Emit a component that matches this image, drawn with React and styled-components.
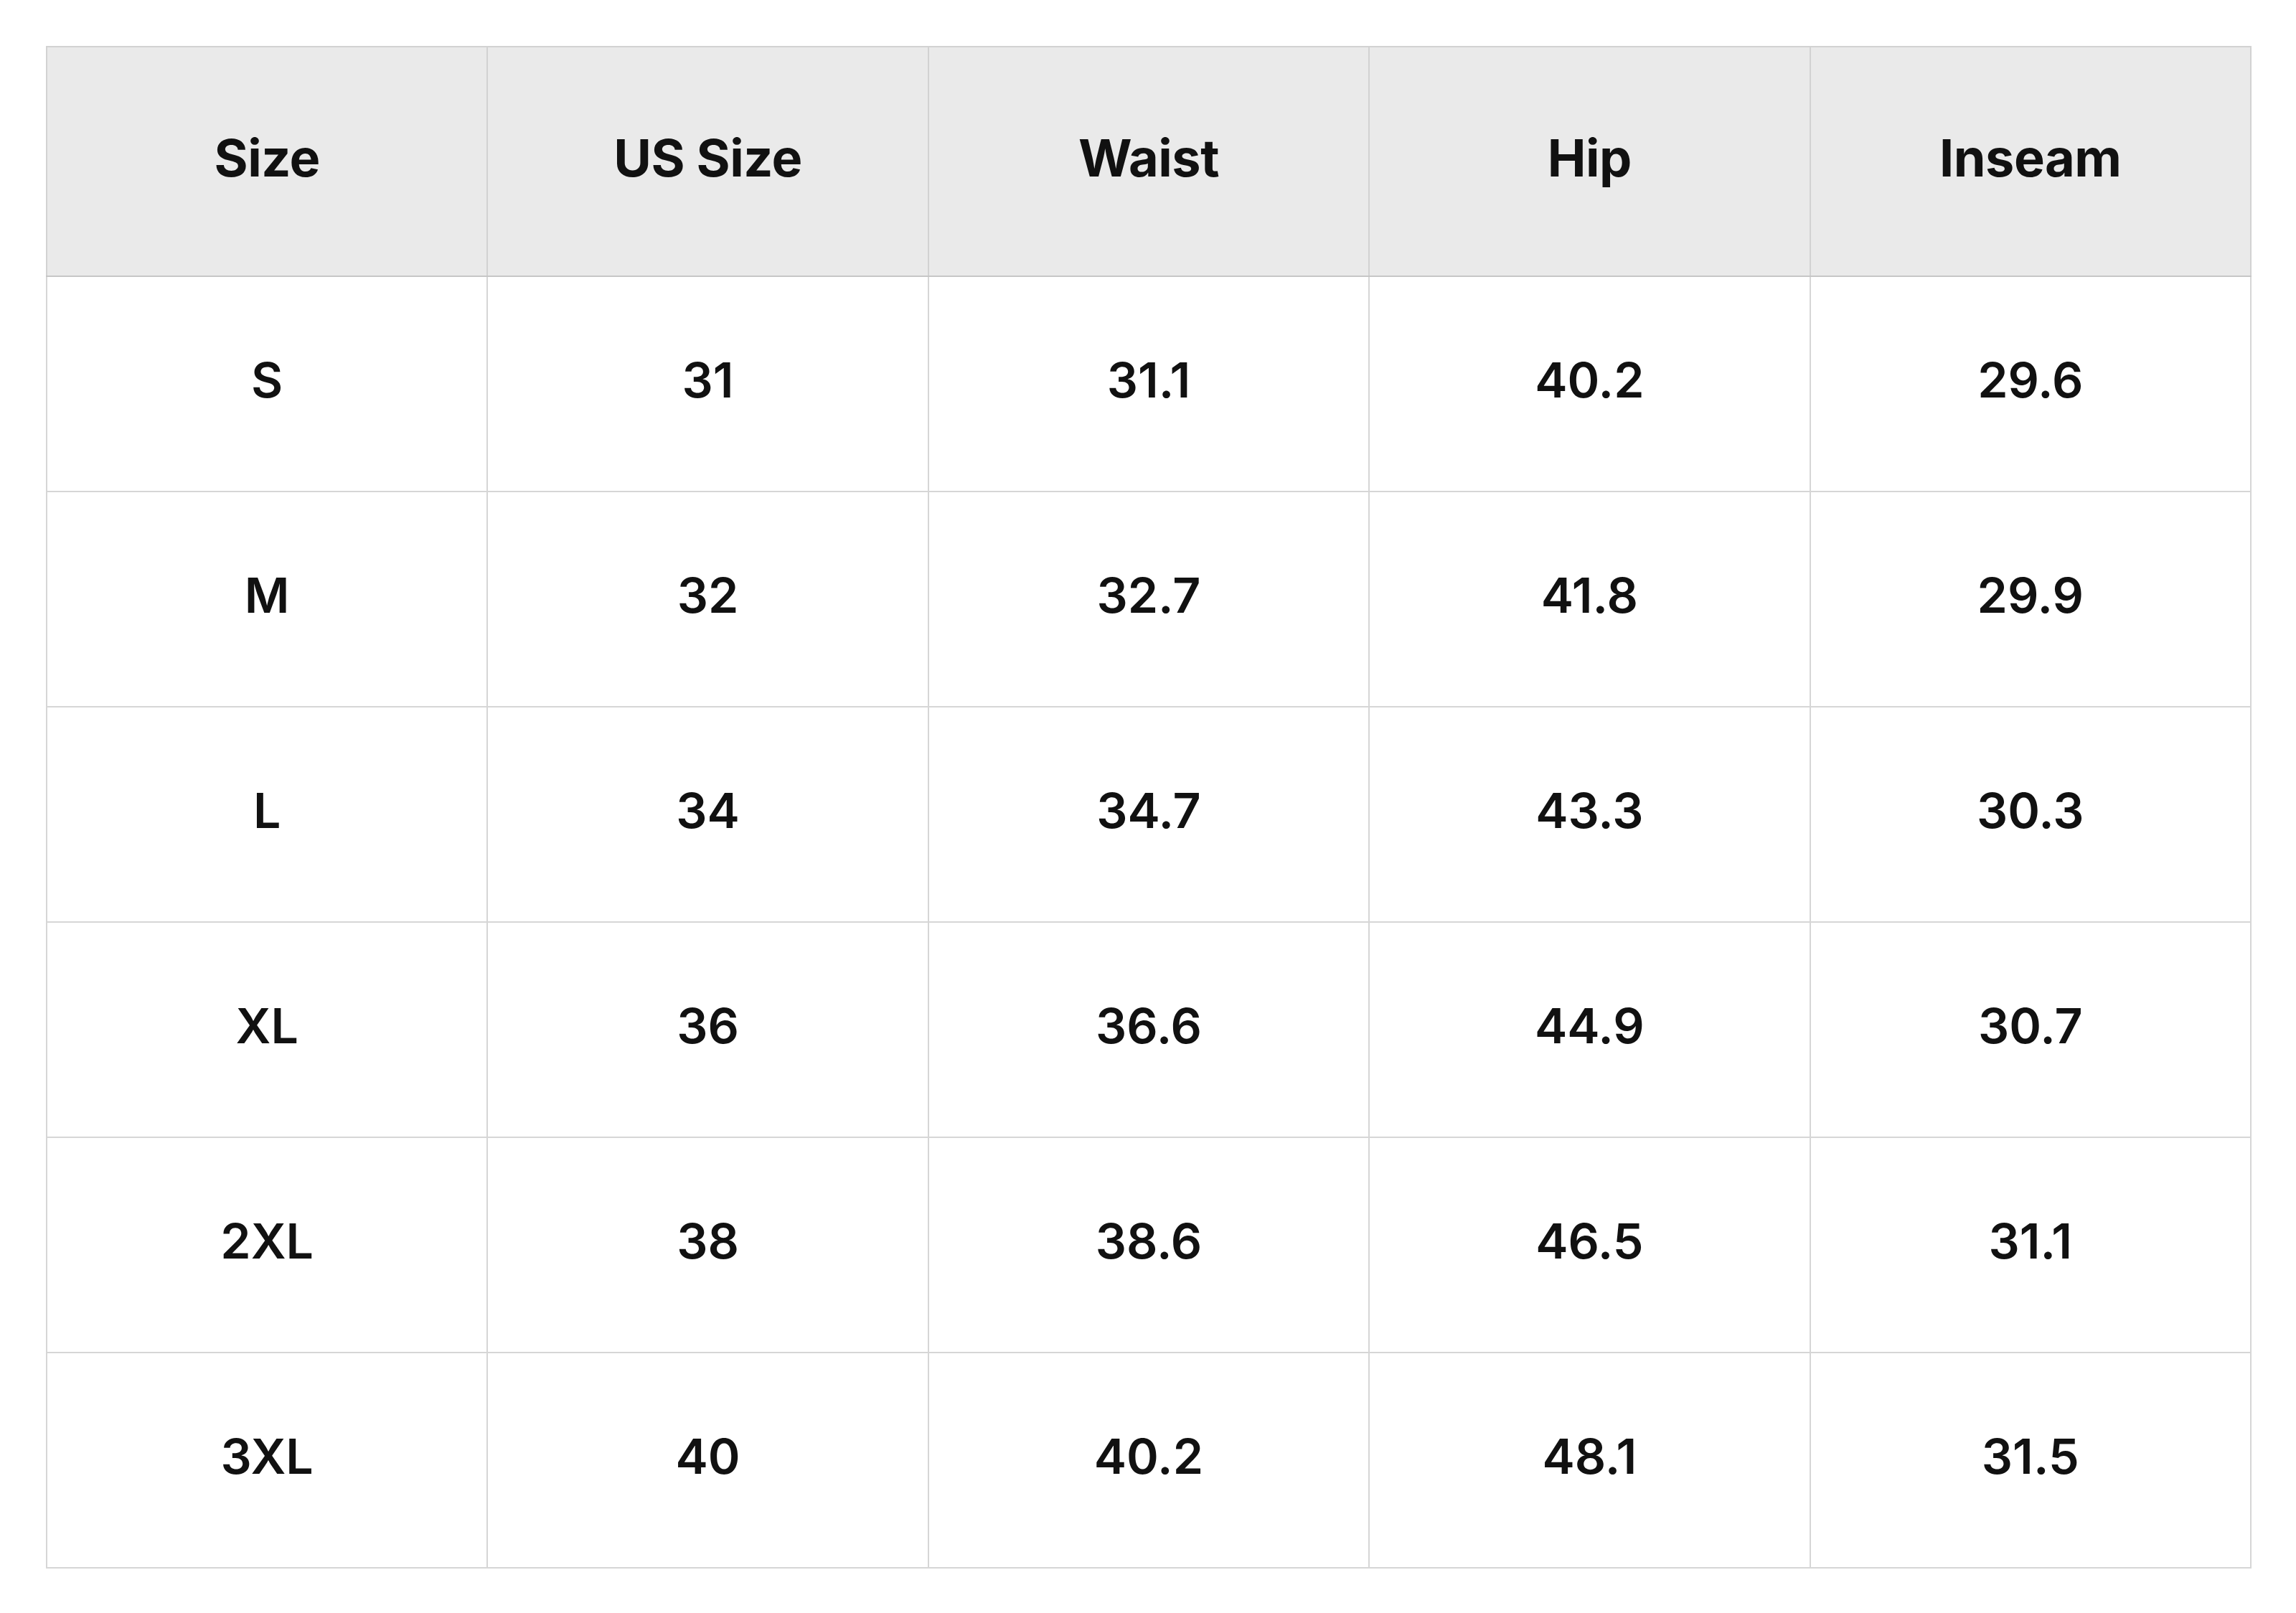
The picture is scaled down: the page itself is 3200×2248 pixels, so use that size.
import styled, { createGlobalStyle } from "styled-components";

const GlobalStyle = createGlobalStyle`
  body {
    margin: 0;
    background: #ffffff;
    font-family: Inter, "Liberation Sans", sans-serif;
    color: #111111;
  }
`;

const Page = styled.div`
  padding: 64px 62px 62px 64px;
`;

const Table = styled.table`
  width: 3074px;
  table-layout: fixed;
  border-collapse: collapse;
  border: 2px solid #c8c8c8;
`;

const HeadCell = styled.th`
  height: 306px;
  padding: 0 0 12px;
  background: #eaeaea;
  border: 2px solid #d2d2d2;
  border-bottom-color: #c6c6c6;
  font-size: 72px;
  font-weight: 700;
  letter-spacing: -0.5px;
  text-align: center;
  vertical-align: middle;
`;

const Cell = styled.td`
  height: 286px;
  padding: 0 0 12px;
  border: 2px solid #d6d6d6;
  font-size: 68px;
  font-weight: 600;
  text-align: center;
  vertical-align: middle;
`;

const columns = ["Size", "US Size", "Waist", "Hip", "Inseam"];

const rows = [
  ["S", "31", "31.1", "40.2", "29.6"],
  ["M", "32", "32.7", "41.8", "29.9"],
  ["L", "34", "34.7", "43.3", "30.3"],
  ["XL", "36", "36.6", "44.9", "30.7"],
  ["2XL", "38", "38.6", "46.5", "31.1"],
  ["3XL", "40", "40.2", "48.1", "31.5"],
];

export default function App() {
  return (
    <Page>
      <GlobalStyle />
      <Table>
        <thead>
          <tr>
            {columns.map((c) => (
              <HeadCell key={c}>{c}</HeadCell>
            ))}
          </tr>
        </thead>
        <tbody>
          {rows.map((r) => (
            <tr key={r[0]}>
              {r.map((v, i) => (
                <Cell key={i}>{v}</Cell>
              ))}
            </tr>
          ))}
        </tbody>
      </Table>
    </Page>
  );
}
